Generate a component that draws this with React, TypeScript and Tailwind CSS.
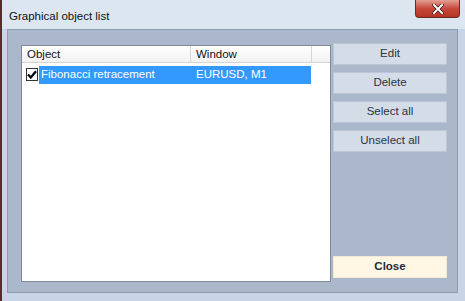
import { FC } from "react";

const font = { fontFamily: '"Liberation Sans", Arial, sans-serif' };

type ButtonProps = {
    label: string;
    primary?: boolean;
};

const DialogButton: FC<ButtonProps> = ({ label, primary }) => (
    <button
        className={
            primary
                ? "w-[114px] h-[22px] bg-[#fff6e3] border border-[#f3ead6] text-[11.5px] font-bold text-[#1c2a3c]"
                : "w-[114px] h-[22px] bg-[#d4dce7] border border-[#bcc6d4] text-[11.5px] text-[#2b3440]"
        }
    >
        {label}
    </button>
);

export default function App() {
    return (
        <div
            className="w-[465px] h-[301px] flex flex-col bg-[#c7d5e6] border-l-[2px] border-[#5b2a2e] overflow-hidden"
            style={font}
        >
            {/* title bar */}
            <div className="h-[29px] flex items-start justify-between bg-[#dce6f1] pl-[7px] pr-[5px]">
                <span className="mt-[8px] text-[11.5px] text-[#111]">Graphical object list</span>
                <button className="w-[45px] h-[18px] rounded-b-[4px] border border-t-0 border-[#6b2a22] bg-[linear-gradient(#e5a095,#c8493c_50%,#b43324)] flex items-center justify-center">
                    <svg width="12" height="10" viewBox="0 0 12 10">
                        <path d="M2 1 L10 9 M10 1 L2 9" stroke="#3a1410" strokeWidth="3.4" strokeLinecap="square" />
                        <path d="M2 1 L10 9 M10 1 L2 9" stroke="#fff" strokeWidth="2" strokeLinecap="square" />
                    </svg>
                </button>
            </div>

            {/* client area */}
            <div className="ml-[5px] mr-[7px] h-[264px] bg-[#abb8cb] border border-[#8d9bb0] flex pt-[13px] pl-[13px]">
                <div className="mt-[2px] w-[310px] h-[237px] bg-white border border-[#828a96] text-[11.5px]">
                    <div className="flex h-[17px] border-b border-[#d5d5d5] bg-[linear-gradient(#ffffff,#f2f2f2)] text-[#111]">
                        <div className="w-[169px] pl-[5px] border-r border-[#d5d5d5] leading-[17px]">Object</div>
                        <div className="w-[121px] pl-[5px] border-r border-[#d5d5d5] leading-[17px]">Window</div>
                        <div className="flex-1" />
                    </div>
                    <div className="flex items-center h-[19px] mt-[2px]">
                        <div className="ml-[4px] w-[12px] h-[13px] border border-[#333] bg-white flex items-center justify-center">
                            <svg width="10" height="9" viewBox="0 0 10 9">
                                <path d="M1 4.5 L3.8 7.5 L9 1.2" fill="none" stroke="#000" strokeWidth="2.2" />
                            </svg>
                        </div>
                        <div className="ml-[1px] w-[272px] h-[18px] bg-[#3399ff] text-white flex items-center">
                            <span className="w-[153px] pl-[2px]">Fibonacci retracement</span>
                            <span className="pl-[4px]">EURUSD, M1</span>
                        </div>
                    </div>
                </div>

                <div className="ml-[2px] flex flex-col gap-[7px] pb-[14px]">
                    <DialogButton label="Edit" />
                    <DialogButton label="Delete" />
                    <DialogButton label="Select all" />
                    <DialogButton label="Unselect all" />
                    <div className="flex-1" />
                    <DialogButton label="Close" primary />
                </div>
            </div>
        </div>
    );
}
